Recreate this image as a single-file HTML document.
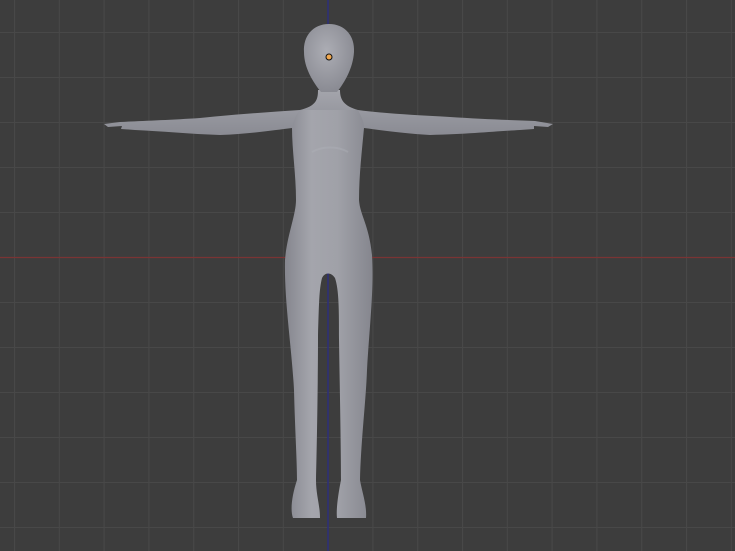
<!DOCTYPE html>
<html><head><style>
html,body{margin:0;padding:0;background:#3d3d3d;overflow:hidden}
svg{display:block}
</style></head><body>
<svg width="735" height="551" viewBox="0 0 735 551" xmlns="http://www.w3.org/2000/svg">
<defs>
<pattern id="g" x="14" y="32" width="44.8" height="45" patternUnits="userSpaceOnUse">
<path d="M0.5 0V45M0 0.5H44.8" stroke="#484848" stroke-width="1" fill="none"/>
</pattern>
<linearGradient id="b" x1="0" y1="0" x2="1" y2="0">
<stop offset="0" stop-color="#85868e"/>
<stop offset="0.3" stop-color="#a4a5ac"/>
<stop offset="0.6" stop-color="#a0a1a8"/>
<stop offset="1" stop-color="#85868e"/>
</linearGradient>
<linearGradient id="a" x1="0" y1="0" x2="0" y2="1">
<stop offset="0" stop-color="#a4a5ac"/>
<stop offset="1" stop-color="#8a8b93"/>
</linearGradient>
<radialGradient id="h" cx="0.45" cy="0.4" r="0.6">
<stop offset="0" stop-color="#acadb4"/>
<stop offset="1" stop-color="#8a8b93"/>
</radialGradient>
</defs>
<rect width="735" height="551" fill="#3d3d3d"/>
<rect width="735" height="551" fill="url(#g)"/>
<line x1="0" y1="257.5" x2="735" y2="257.5" stroke="#7a3434" stroke-width="1.2"/>
<line x1="328" y1="0" x2="328" y2="551" stroke="#2c2e7a" stroke-width="1.5"/>
<path fill="url(#a)" d="M318,90 C318,100 316,106 300,110 C270,112 240,114 200,118 C170,120 140,121 120,122 L104,124 L108,127 L122,126 L121,129 L135,130 C160,131 190,134 220,135 C250,134 275,130 292,128 L364,128 C380,130 400,133 430,135 C470,134 500,131 520,130 L534,129 L534,126 L548,127 L553,124 L535,121 C510,120 480,119 450,117 C410,115 380,113 358,110 C344,106 340,100 340,90 Z"/>
<path fill="url(#b)" d="M300,110 L358,110 C362,118 364,122 364,128 C362,150 359,175 359,200 C360,215 369,225 372,255 C374,290 370,320 367,370 C366,400 361,440 360,480 C362,492 367,505 366,518 L337,518 C336,510 338,495 341,480 C341,450 340,400 339,340 C339,310 339,290 335,278 C331,272 325,272 322,278 C319,290 319,305 318,335 C318,380 317,440 316,480 C316,495 320,505 320,518 L293,518 C290,510 292,495 297,480 C297,460 295,430 294,390 C292,350 284,300 285,260 C287,235 296,215 296,200 C296,175 292,150 292,128 C294,120 296,114 300,110 Z"/>
<path fill="none" stroke="#b0b1b8" stroke-width="2" opacity="0.4" d="M312,152 C322,146 338,146 348,152"/>
<path fill="url(#h)" d="M329,24 C345,24 355,36 354,52 C353,68 345,82 337,92 L321,92 C313,82 304,68 304,52 C303,36 313,24 329,24 Z"/>
<circle cx="329" cy="57" r="3" fill="#f0a850" stroke="#111" stroke-width="1"/>
</svg>
</body></html>
